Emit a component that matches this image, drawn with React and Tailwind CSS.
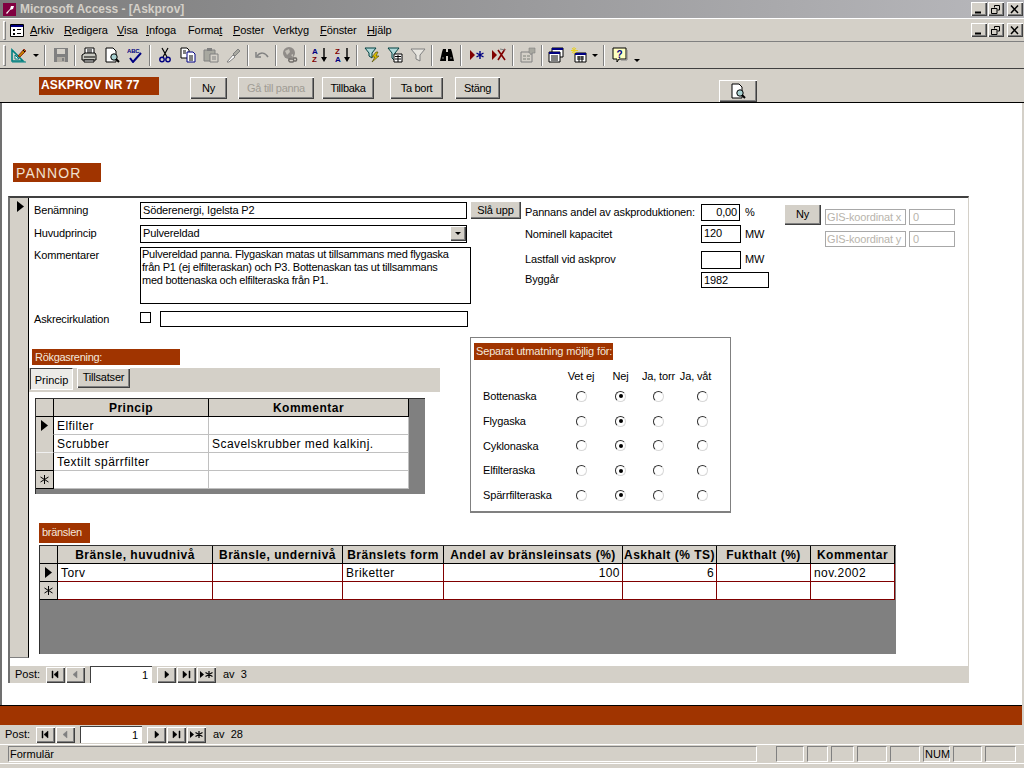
import React from "react";

const raised = "bg-[#d4d0c8] shadow-[inset_1px_1px_0_#ffffff,inset_-1px_-1px_0_#404040,inset_-2px_-2px_0_#808080]";
const Ico = ({ children, w = 16 }) => (
  <svg width={w} height="16" viewBox={`0 0 ${w} 16`} className="block shrink-0">{children}</svg>
);
const DesignI = () => <Ico><path d="M1 14V3l11 11z" fill="none" stroke="#008080" strokeWidth="1.6"/><path d="M4 12V8l4 4z" fill="#ffffff" stroke="#008080"/><path d="M1 15h14" stroke="#008080"/><path d="M7 9l6-7 2 2-6 6z" fill="#c08000" stroke="#800000" strokeWidth=".7"/><path d="M12 3l2 2" stroke="#000"/></Ico>;
const SaveI = () => <Ico><path d="M1 1h14v14H1z" fill="#808080"/><path d="M4 2h8v5H4z" fill="#d4d0c8"/><path d="M4 10h8v5H4z" fill="#b0aca4"/><path d="M9 11h2v3H9z" fill="#808080"/></Ico>;
const PrintI = () => <Ico><path d="M4 1h9v6H4z" fill="#fff" stroke="#000"/><path d="M1 8l3-2h10l1 2v5H1z" fill="#c8c8c0" stroke="#000"/><path d="M3 10h11" stroke="#000" /><path d="M3 13h10v2H3z" fill="#fff" stroke="#000"/><path d="M6 3h5M6 5h5" stroke="#000"/></Ico>;
const PreviewI = () => <Ico><path d="M2 1h7l3 3v11H2z" fill="#fff" stroke="#000"/><circle cx="10" cy="10" r="3.2" fill="#a8d0d0" stroke="#000"/><path d="M12 12l3 3" stroke="#000" strokeWidth="2"/></Ico>;
const SpellI = () => <Ico><text x="0" y="6" fontSize="6" fontWeight="700" fontFamily="Liberation Sans" fill="#000080">ABC</text><path d="M3 11l3 4 8-9" fill="none" stroke="#000080" strokeWidth="2"/></Ico>;
const CutI = () => <Ico><path d="M5 1l5 9M11 1L6 10" stroke="#000" strokeWidth="1.2"/><circle cx="5" cy="12.5" r="2.2" fill="none" stroke="#000080" strokeWidth="1.4"/><circle cx="11" cy="12.5" r="2.2" fill="none" stroke="#000080" strokeWidth="1.4"/></Ico>;
const CopyI = () => <Ico><path d="M1 1h6l2 2v8H1z" fill="#fff" stroke="#000"/><path d="M7 5h6l2 2v8H7z" fill="#fff" stroke="#000080"/><path d="M3 4h3M3 6h3M9 9h4M9 11h4M9 13h4" stroke="#000"/></Ico>;
const PasteI = () => <Ico><path d="M1 3h11v11H1z" fill="#a8a8a0" stroke="#808080"/><path d="M4 1h5v3H4z" fill="#808080"/><path d="M7 7h8v8H7z" fill="#d4d0c8" stroke="#808080"/><path d="M9 10h4M9 12h4" stroke="#808080"/></Ico>;
const PainterI = () => <Ico><path d="M1 15l6-7 2 2-6 5z" fill="#ffffff" stroke="#808080"/><path d="M7 7l5-5 2 2-5 5z" fill="#a8a8a0" stroke="#808080"/></Ico>;
const UndoI = () => <Ico><path d="M2 5v5h5" fill="none" stroke="#808080" strokeWidth="1.5"/><path d="M3 9c3-4 8-4 11 1" fill="none" stroke="#808080" strokeWidth="1.5"/></Ico>;
const GlobeI = () => <Ico><circle cx="7" cy="6" r="6" fill="#908c88"/><path d="M3 4l4-2 1 3-3 3zM9 8l2-1v3z" fill="#c4c0b8"/><path d="M7 12h4a2 2 0 010 3H9a2 2 0 01-2-3zM11 11h3a2 2 0 010 3h-2" fill="none" stroke="#706c68" strokeWidth="1.4"/></Ico>;
const SortI = ({ a, b }) => <Ico><text x="0" y="7" fontSize="8" fontWeight="700" fontFamily="Liberation Sans" fill={a}>{a === "#000080" ? "A" : "Z"}</text><text x="0" y="15" fontSize="8" fontWeight="700" fontFamily="Liberation Sans" fill={b}>{a === "#000080" ? "Z" : "A"}</text><path d="M12 1v12" stroke="#000" strokeWidth="1.4"/><path d="M9 10h6l-3 5z" fill="#000"/></Ico>;
const FilterBoltI = () => <Ico><path d="M1 1h11L8 6v5L5 9V6z" fill="#b0d8d8" stroke="#004040"/><path d="M12 5l-4 5h3l-3 5 7-6h-3l2-4z" fill="#e0c000" stroke="#404000" strokeWidth=".6"/></Ico>;
const FilterFormI = () => <Ico><path d="M1 1h11L8 6v8L5 11V6z" fill="#b0d8d8" stroke="#004040"/><path d="M7 7h8v8H7z" fill="#fff" stroke="#000"/><path d="M8 9.5h6M8 12h6M11 8v7" stroke="#000"/></Ico>;
const FilterGrayI = () => <Ico><path d="M1 2h14L10 8v6l-4-2V8z" fill="#e8e6e0" stroke="#808080"/></Ico>;
const BinoI = () => <Ico><path d="M1 14l2-9 1-3h3v12H1zM9 2h3l1 3 2 9H9z" fill="#000"/><path d="M7 5h2v4H7z" fill="#000"/><path d="M3 11h2M11 11h2" stroke="#808080"/></Ico>;
const NewRecI = () => <Ico><path d="M2 3l5 5-5 5z" fill="#800000"/><path d="M12 4v8M8.5 6l7 4M15.500 6l-7 4" stroke="#000080" strokeWidth="1.4"/></Ico>;
const DelRecI = () => <Ico><path d="M1 3l5 5-5 5z" fill="#800000"/><path d="M7 3l7 10M14 2L7 13" stroke="#800000" strokeWidth="1.6"/><path d="M9 2l5 1" stroke="#808080"/></Ico>;
const PropsI = () => <Ico><path d="M1 5h11v10H1z" fill="#d4d0c8" stroke="#808080"/><path d="M3 8h3v2H3zM7 8h3v2H7zM3 11h3v2H3zM7 11h3v2H7z" fill="#a8a8a0"/><path d="M9 1h6v5h-3l-1 2-1-2H9z" fill="#a8a8a0" stroke="#808080" strokeWidth=".6"/></Ico>;
const DbI = () => <Ico><path d="M4 1h11v9H4z" fill="#fff" stroke="#000"/><path d="M4 1h11v2H4z" fill="#000080"/><path d="M1 5h11v10H1z" fill="#fff" stroke="#000"/><path d="M1 5h11v2H1z" fill="#000080"/><path d="M3 9h7M3 11h7M3 13h7" stroke="#000"/></Ico>;
const NewObjI = () => <Ico><path d="M4 6h11v9H4z" fill="#fff" stroke="#000"/><path d="M4 6h11v2H4z" fill="#000080"/><path d="M6 10h7M6 12h7M8 9v6M11 9v6" stroke="#000"/><path d="M3 0v7M0 3.500h7M1 1l4 5M5 1L1 6" stroke="#e8d020"/></Ico>;
const HelpI = () => <Ico><path d="M1 1h13v11H7l-2 3v-3H1z" fill="#ffffc0" stroke="#000"/><text x="4.500" y="10.500" fontSize="10" fontWeight="700" fontFamily="Liberation Sans" fill="#000080">?</text><path d="M15 3v10H9" stroke="#808080" fill="none"/></Ico>;

const Arrow = () => <div className="flex justify-center"><div className="w-0 h-0 border-x-[3px] border-x-transparent border-t-[3px] border-t-black" /></div>;
const Tb = ({ children }) => <div className="w-[23px] h-[22px] flex items-center justify-center">{children}</div>;
const Sep = ({ w }) => <div className={`${w} h-[22px] flex items-center justify-center`}><div className="w-[2px] h-[21px] border-l border-l-[#808080] border-r border-r-white" /></div>;

const Sunken = ({ className = "", children }) => (
  <div className={`bg-white border border-black px-[2px] leading-[15px] whitespace-nowrap overflow-hidden ${className}`}>{children}</div>
);

const WinBtn = ({ kind }) => (
  <div className={`w-[16px] h-[14px] ${raised} flex items-center justify-center`}>
    <svg width="10" height="9" viewBox="0 0 10 9">
      {kind === "min" && <path d="M1 7.500h6" stroke="#000" strokeWidth="2" />}
      {kind === "max" && <path d="M3.500 2.500V.5h5v4.500h-2M.5 3.500h5.500v5H.5zM.5 3.500h5.500" fill="none" stroke="#000" />}
      {kind === "close" && <path d="M1 .5l7 7.500M8 .5L1 8" stroke="#000" strokeWidth="1.5" />}
    </svg>
  </div>
);
const WinBtns = () => <div className="flex gap-[1px] mr-[1px]"><WinBtn kind="min" /><WinBtn kind="max" /><div className="w-[1px]" /><WinBtn kind="close" /></div>;

const menus = [
  ["w-[34px]", "A", "rkiv"], ["w-[53px]", "R", "edigera"], ["w-[29px]", "V", "isa"], ["w-[42px]", "I", "nfoga"],
  ["w-[45px]", "", "Forma", "t"], ["w-[40px]", "P", "oster"], ["w-[47px]", "", "Verkty", "g"], ["w-[47px]", "F", "önster"], ["w-[40px]", "H", "jälp"],
];

const FormBtn = ({ className = "", children, off }) => (
  <div className={`${raised} h-[22px] flex items-center justify-center text-[11px] tracking-[-0.3px] ${off ? "text-[#a09c94]" : "text-black"} ${className}`}>{children}</div>
);

const NavBtn = ({ children }) => <div className={`w-[19px] h-[16px] ${raised} flex items-center justify-center`}>{children}</div>;
const G = ({ d, c = "#000" }) => <svg width="13" height="9" viewBox="0 0 13 9" className="block"><path d={d} fill={c} stroke={c} strokeWidth=".5" /></svg>;
const Nav = ({ total, cls }) => (
  <div className={`flex items-center pl-[5px] text-[11px] tracking-normal text-black bg-[#d4d0c8] ${cls}`}>
    <div className="w-[31px]">Post:</div>
    <div className="flex gap-[1px]">
      <NavBtn><G d="M3 1v7h1V1zM9 1v7L5 4.500z" /></NavBtn>
      <NavBtn><G d="M8 1v7L4 4.500z" c="#808080" /></NavBtn>
    </div>
    <div className="ml-[5px] w-[62px] h-[17px] bg-white border-t border-l border-t-[#404040] border-l-[#404040] text-right pr-[4px] leading-[17px]">1</div>
    <div className="ml-[5px] flex gap-[1px]">
      <NavBtn><G d="M5 1v7l4-3.500z" /></NavBtn>
      <NavBtn><G d="M3 1v7l4-3.500zM9 1v7h1V1z" /></NavBtn>
      <NavBtn><svg width="15" height="9" viewBox="0 0 15 9"><path d="M1 1v7l4-3.500z" fill="#000" /><path d="M10 1v7M6.500 2.500l7 4M13.500 2.500l-7 4" stroke="#000" strokeWidth="1.2" /></svg></NavBtn>
    </div>
    <div className="ml-[7px]">av&nbsp; {total}</div>
  </div>
);

const Tri = () => <svg width="9" height="11" viewBox="0 0 9 11" className="block"><path d="M1 0l7 5.500L1 11z" fill="#000" /></svg>;
const Star = () => <svg width="9" height="9" viewBox="0 0 9 9" className="block"><path d="M4.500 0v9M.5 2l8 5M8.500 2l-8 5" stroke="#000" /></svg>;
const Sel = ({ kind, border }) => (
  <div className={`w-[18px] h-[18px] bg-[#d4d0c8] border-r border-r-black border-b flex items-center justify-center ${border}`}>
    {kind === "t" && <Tri />}{kind === "s" && <Star />}
  </div>
);

const Row = ({ sel, cells, cols, line, selLine, aligns = [] }) => (
  <div className="flex h-[18px]">
    <Sel kind={sel} border={selLine} />
    {cols.map((c, i) => (
      <div key={i} className={`${c} h-[18px] bg-white border-r border-b ${line} pl-[3px] pr-[2px] leading-[19px] text-[12px] tracking-[0.45px] whitespace-nowrap overflow-hidden ${aligns[i] || ""}`}>{cells[i] || ""}</div>
    ))}
  </div>
);
const Head = ({ cols, labels }) => (
  <div className="flex h-[18px]">
    <div className="w-[18px] h-[18px] bg-[#d4d0c8] border-r border-b border-black" />
    {cols.map((c, i) => (
      <div key={i} className={`${c} h-[18px] bg-[#d4d0c8] border-r border-b border-black text-center font-bold text-[12px] tracking-[0.5px] leading-[18px] whitespace-nowrap overflow-hidden`}>{labels[i]}</div>
    ))}
  </div>
);

const Radio = ({ on }) => (
  <div className="flex justify-center items-center h-full">
    <div className="w-[11px] h-[11px] rounded-full border border-t-[#303030] border-l-[#303030] border-b-[#d8d8d8] border-r-[#d8d8d8] bg-white flex items-center justify-center">
      {on && <div className="w-[4px] h-[4px] rounded-full bg-black" />}
    </div>
  </div>
);

const ash = ["Bottenaska", "Flygaska", "Cyklonaska", "Elfilteraska", "Spärrfilteraska"];
const cols1 = ["w-[155px]", "w-[200px]"];
const cols2 = ["w-[155px]", "w-[130px]", "w-[101px]", "w-[179px]", "w-[94px]", "w-[94px]", "w-[84px]"];
const al2 = ["", "", "", "text-right", "text-right", "", ""];

const StatusCell = ({ w, children }) => (
  <div className={`${w} h-[16px] border-t border-l border-t-[#808080] border-l-[#808080] border-b border-r border-b-white border-r-white text-[11px] tracking-normal leading-[15px] pl-[1px]`}>{children}</div>
);

export default function App() {
  return (
    <div className="w-[1024px] h-[768px] overflow-hidden bg-[#d4d0c8] flex flex-col text-black font-['Liberation_Sans',Arial,sans-serif] text-[11px] tracking-[-0.15px]">
      {/* title bar */}
      <div className="h-[18px] flex items-center bg-gradient-to-r from-[#7c7c7c] to-[#b8b8bc] pl-[3px] shrink-0">
        <svg width="13" height="13" viewBox="0 0 13 13" className="block"><path d="M0 0h13v13H0z" fill="#800040"/><path d="M3 10l4-4 1-3 3 0-1 3-3 1-3 4z" fill="#fff"/></svg>
        <div className="ml-[4px] text-[12px] font-bold tracking-[-0.05px] text-[#d4d0c8] whitespace-nowrap">Microsoft Access - [Askprov]</div>
        <div className="ml-auto"><WinBtns /></div>
      </div>
      {/* menu */}
      <div className="h-[24px] shrink-0 border-t border-t-white border-b border-b-[#808080] flex items-center pl-[3px]">
        <div className="w-[3px] h-[19px] border-l border-t border-white border-r border-b border-r-[#808080] border-b-[#808080]" />
        <svg width="14" height="13" viewBox="0 0 14 13" className="block ml-[4px]"><path d="M.5.5h13v12H.5z" fill="#fff" stroke="#000"/><path d="M1 1h12v2H1z" fill="#000080"/><path d="M3 5h2v2H3zM3 9h2v2H3zM7 5h4v1H7zM7 9h4v1H7z" fill="#000"/></svg>
        <div className="flex ml-[6px] text-[11px] tracking-[-0.1px]">
          {menus.map(([w, u, rest, tail]) => (
            <div key={rest} className={`${w} whitespace-nowrap`}><span className="underline">{u}</span>{rest}{tail && <span className="underline">{tail}</span>}</div>
          ))}
        </div>
        <div className="ml-auto"><WinBtns /></div>
      </div>
      {/* toolbar */}
      <div className="h-[27px] shrink-0 flex items-center pl-[3px] border-b border-b-[#404040]">
        <div className="w-[3px] h-[21px] border-l border-t border-white border-r border-b border-r-[#808080] border-b-[#808080] mr-[2px]" />
        <div className="w-[22px] flex justify-center"><DesignI /></div>
        <div className="w-[11px]"><Arrow /></div>
        <Sep w="w-[8px]" /><Tb><SaveI /></Tb><Sep w="w-[5px]" />
        <Tb><PrintI /></Tb><Tb><PreviewI /></Tb><Tb><SpellI /></Tb><Sep w="w-[7px]" />
        <Tb><CutI /></Tb><Tb><CopyI /></Tb><Tb><PasteI /></Tb><Tb><PainterI /></Tb><Sep w="w-[5px]" />
        <Tb><UndoI /></Tb><Sep w="w-[5px]" /><Tb><GlobeI /></Tb><Sep w="w-[7px]" />
        <Tb><SortI a="#000080" b="#800000" /></Tb><Tb><SortI a="#800000" b="#000080" /></Tb><Sep w="w-[6px]" />
        <Tb><FilterBoltI /></Tb><Tb><FilterFormI /></Tb><Tb><FilterGrayI /></Tb><Sep w="w-[6px]" />
        <Tb><BinoI /></Tb><Sep w="w-[6px]" /><Tb><NewRecI /></Tb><Tb><DelRecI /></Tb><Sep w="w-[6px]" />
        <Tb><PropsI /></Tb><Sep w="w-[5px]" /><Tb><DbI /></Tb><Tb><NewObjI /></Tb>
        <div className="w-[10px]"><Arrow /></div><Sep w="w-[8px]" /><Tb><HelpI /></Tb>
        <div className="w-[11px] pt-[10px]"><Arrow /></div>
      </div>
      {/* form header */}
      <div className="h-[34px] shrink-0 border-b border-b-black flex items-start pt-[8px] pl-[39px]">
        <div className="w-[120px] h-[18px] bg-[#a03400] text-white font-bold text-[12px] leading-[16px] pl-[2px] tracking-[0.15px]">ASKPROV NR 77</div>
        <FormBtn className="ml-[31px] w-[37px]">Ny</FormBtn>
        <FormBtn off className="ml-[11px] w-[76px]">Gå till panna</FormBtn>
        <FormBtn className="ml-[8px] w-[52px]">Tillbaka</FormBtn>
        <FormBtn className="ml-[16px] w-[53px]">Ta bort</FormBtn>
        <FormBtn className="ml-[12px] w-[45px]">Stäng</FormBtn>
        <div className={`ml-[219px] mt-[3px] w-[38px] h-[22px] ${raised} flex items-center justify-center`}><PreviewI /></div>
      </div>
      {/* body */}
      <div className="h-[602px] shrink-0 bg-white border-l-[2px] border-l-[#707070] mr-[2px] flex flex-col">
        <div className="mt-[60px] ml-[11px] w-[88px] h-[19px] bg-[#a03400] text-[#f0e0d0] text-[14px] leading-[21px] pl-[3px] tracking-[1.1px]">PANNOR</div>
        <div className="mt-[14px] ml-[6px] w-[961px] border-t-[2px] border-t-[#404040] border-l-[2px] border-l-[#707070] border-r border-r-[#d4d0c8] flex flex-col">
          <div className="flex h-[460px]">
            <div className="w-[19px] h-[460px] bg-[#d4d0c8] border-r border-r-black border-b border-b-[#808080] pl-[6px] pt-[3px] shrink-0"><Tri /></div>
            <div className="flex flex-col flex-1">
              {/* top block */}
              <div className="flex h-[139px]">
                <div className="w-[496px] pl-[5px] flex flex-col">
                  <div className="flex items-start mt-[3px] h-[20px]">
                    <div className="w-[106px] leading-[19px]">Benämning</div>
                    <Sunken className="w-[327px] h-[17px] mt-[1px]">Söderenergi, Igelsta P2</Sunken>
                    <div className={`ml-[3px] w-[51px] h-[18px] ${raised} text-[11px] leading-[18px] text-center`}>Slå upp</div>
                  </div>
                  <div className="flex items-start mt-[4px] h-[18px]">
                    <div className="w-[106px] leading-[17px]">Huvudprincip</div>
                    <div className="w-[327px] h-[18px] bg-white border border-black pl-[2px] leading-[15px] flex">
                      <div className="flex-1">Pulvereldad</div>
                      <div className={`w-[16px] h-[15px] ${raised} flex items-center justify-center`}><Arrow /></div>
                    </div>
                  </div>
                  <div className="flex items-start mt-[4px] h-[57px]">
                    <div className="w-[106px] leading-[17px]">Kommentarer</div>
                    <div className="w-[331px] h-[57px] bg-white border border-black pl-[1px] pr-[2px] leading-[13px] tracking-[-0.25px] whitespace-pre">{"Pulvereldad panna. Flygaskan matas ut tillsammans med flygaska\nfrån P1 (ej elfilteraskan) och P3. Bottenaskan tas ut tillsammans\nmed bottenaska och elfilteraska från P1."}</div>
                  </div>
                  <div className="flex items-start mt-[7px]">
                    <div className="w-[106px] leading-[16px]">Askrecirkulation</div>
                    <div className="w-[11px] h-[11px] border border-black mt-[1px]" />
                    <div className="ml-[9px] w-[308px] h-[16px] border border-black bg-white" />
                  </div>
                </div>
                <div className="w-[244px] flex flex-col">
                  <div className="flex mt-[6px] h-[17px] leading-[17px]">
                    <div className="w-[176px] whitespace-nowrap">Pannans andel av askproduktionen:</div>
                    <Sunken className="w-[39px] h-[17px] text-right">0,00</Sunken>
                    <div className="ml-[5px]">%</div>
                  </div>
                  <div className="flex mt-[4px] h-[18px] leading-[19px]">
                    <div className="w-[176px]">Nominell kapacitet</div>
                    <Sunken className="w-[40px] h-[18px]">120</Sunken>
                    <div className="ml-[4px]">MW</div>
                  </div>
                  <div className="flex mt-[8px] h-[18px] leading-[17px]">
                    <div className="w-[176px]">Lastfall vid askprov</div>
                    <Sunken className="w-[40px] h-[18px]"></Sunken>
                    <div className="ml-[4px]">MW</div>
                  </div>
                  <div className="flex mt-[3px] h-[16px] leading-[15px]">
                    <div className="w-[176px]">Byggår</div>
                    <Sunken className="w-[68px] h-[16px] leading-[14px]">1982</Sunken>
                  </div>
                </div>
                <div className="ml-[15px] flex items-start pt-[6px]">
                  <div className={`w-[37px] h-[21px] ${raised} text-[11px] leading-[20px] text-center`}>Ny</div>
                  <div className="ml-[4px] flex flex-col gap-[6px] pt-[5px]">
                    {["GIS-koordinat x", "GIS-koordinat y"].map((t) => (
                      <div key={t} className="flex gap-[3px] h-[16px] text-[#b8b4ac] leading-[15px]">
                        <div className="w-[81px] border border-[#a8a8a8] pl-[1px] whitespace-nowrap overflow-hidden">{t}</div>
                        <div className="w-[46px] border border-[#a8a8a8] pl-[3px]">0</div>
                      </div>
                    ))}
                  </div>
                </div>
              </div>
              {/* middle */}
              <div className="flex h-[176px]">
                <div className="w-[441px] flex flex-col">
                  <div className="mt-[12px] ml-[3px] w-[148px] h-[16px] bg-[#a03400] text-[#f4e8dc] pl-[3px] leading-[17px] tracking-[-0.3px]">Rökgasrening:</div>
                  <div className="mt-[3px] w-[411px] h-[24px] bg-[#d4d0c8] flex items-start pl-[1px]">
                    <div className="w-[43px] h-[22px] bg-[#ecebe7] border-t border-l border-t-[#404040] border-l-[#404040] border-r border-b border-r-white border-b-white text-[11px] tracking-normal leading-[22px] text-center">Princip</div>
                    <div className={`ml-[4px] w-[53px] h-[20px] ${raised} text-[11px] tracking-[-0.2px] leading-[18px] text-center`}>Tillsatser</div>
                  </div>
                  <div className="mt-[6px] ml-[6px] w-[390px] h-[96px] bg-[#808080] border-t border-l border-t-[#303030] border-l-[#303030]">
                    <Head cols={cols1} labels={["Princip", "Kommentar"]} />
                    <Row sel="t" cols={cols1} line="border-[#c0c0c0]" selLine="border-b-[#d4d0c8]" cells={["Elfilter"]} />
                    <Row cols={cols1} line="border-[#c0c0c0]" selLine="border-b-[#f0f0f0]" cells={["Scrubber", "Scavelskrubber med kalkinj."]} />
                    <Row cols={cols1} line="border-[#c0c0c0]" selLine="border-b-black" cells={["Textilt spärrfilter"]} />
                    <Row sel="s" cols={cols1} line="border-[#c0c0c0]" selLine="border-b-black" cells={[]} />
                  </div>
                </div>
                <div className="w-[261px] h-[176px] border border-[#808080] border-b-[2px] flex flex-col">
                  <div className="mt-[5px] ml-[3px] w-[139px] h-[17px] bg-[#a03400] text-[#f4e8dc] pl-[2px] leading-[16px] whitespace-nowrap">Separat utmatning möjlig för:</div>
                  <div className="mt-[9px] pl-[12px] grid grid-cols-[78px_40px_39px_37px_50px] grid-rows-[15px_repeat(5,24.75px)] items-center">
                    <div />
                    <div className="text-center whitespace-nowrap leading-[15px]">Vet ej</div>
                    <div className="text-center whitespace-nowrap leading-[15px]">Nej</div>
                    <div className="text-center whitespace-nowrap leading-[15px]">Ja, torr</div>
                    <div className="text-center whitespace-nowrap leading-[15px] pr-[13px]">Ja, våt</div>
                    {ash.map((a) => (
                      <React.Fragment key={a}>
                        <div className="whitespace-nowrap">{a}</div>
                        <Radio /><Radio on /><Radio /><Radio />
                      </React.Fragment>
                    ))}
                  </div>
                </div>
              </div>
              {/* fuels */}
              <div className="mt-[10px] ml-[10px] w-[51px] h-[20px] bg-[#a03400] text-[#f4e8dc] pl-[3px] leading-[18px] tracking-[-0.3px]">bränslen</div>
              <div className="mt-[2px] ml-[10px] w-[857px] h-[109px] bg-[#808080] border-t border-l border-t-[#303030] border-l-[#303030]">
                <Head cols={cols2} labels={["Bränsle, huvudnivå", "Bränsle, undernivå", "Bränslets form", "Andel av bränsleinsats (%)", "Askhalt (% TS)", "Fukthalt (%)", "Kommentar"]} />
                <Row sel="t" cols={cols2} aligns={al2} line="border-[#800000]" selLine="border-b-black" cells={["Torv", "", "Briketter", "100", "6", "", "nov.2002"]} />
                <Row sel="s" cols={cols2} aligns={al2} line="border-[#800000]" selLine="border-b-black" cells={[]} />
              </div>
            </div>
          </div>
          <Nav total="3" cls="mt-[8px] h-[17px]" />
        </div>
      </div>
      {/* footer */}
      <div className="h-[20px] shrink-0 bg-[#a03400] border-t border-t-black mr-[2px]" />
      <Nav total="28" cls="h-[19px] mr-[2px]" />
      <div className="h-[20px] shrink-0 border-t border-t-white border-b border-b-white flex items-center pl-[8px] gap-[3px]">
        <StatusCell w="w-[749px] mr-[16px]">Formulär</StatusCell>
        <StatusCell w="w-[28px]" /><StatusCell w="w-[21px]" /><StatusCell w="w-[23px]" /><StatusCell w="w-[30px]" /><StatusCell w="w-[30px]" />
        <StatusCell w="w-[27px]">NUM</StatusCell>
        <StatusCell w="w-[29px]" /><StatusCell w="w-[31px]" />
      </div>
    </div>
  );
}
